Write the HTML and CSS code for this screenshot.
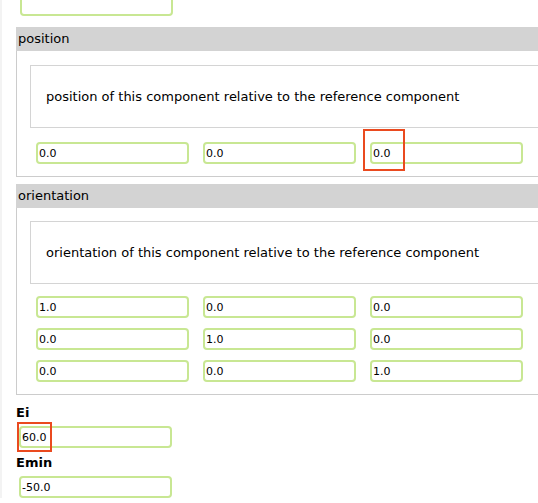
FILE: index.html
```html
<!DOCTYPE html>
<html>
<head>
<meta charset="utf-8">
<link rel="stylesheet" href="styles.css">
</head>
<body>
<div class="page">
  <div class="field field-top"><input class="inp" type="text" value=""></div>

  <div class="section">
    <div class="sec-head">position</div>
    <div class="sec-body">
      <div class="desc">position of this component relative to the reference component</div>
      <div class="grid">
        <div class="cell"><input class="inp" type="text" value="0.0"></div>
        <div class="cell"><input class="inp" type="text" value="0.0"></div>
        <div class="cell"><input class="inp" type="text" value="0.0"><span class="mark mark-pos"></span></div>
      </div>
    </div>
  </div>

  <div class="section section-orient">
    <div class="sec-head">orientation</div>
    <div class="sec-body">
      <div class="desc">orientation of this component relative to the reference component</div>
      <div class="grid">
        <div class="cell"><input class="inp" type="text" value="1.0"></div>
        <div class="cell"><input class="inp" type="text" value="0.0"></div>
        <div class="cell"><input class="inp" type="text" value="0.0"></div>
        <div class="cell"><input class="inp" type="text" value="0.0"></div>
        <div class="cell"><input class="inp" type="text" value="1.0"></div>
        <div class="cell"><input class="inp" type="text" value="0.0"></div>
        <div class="cell"><input class="inp" type="text" value="0.0"></div>
        <div class="cell"><input class="inp" type="text" value="0.0"></div>
        <div class="cell"><input class="inp" type="text" value="1.0"></div>
      </div>
    </div>
  </div>

  <div class="label">Ei</div>
  <div class="field field-ei"><input class="inp" type="text" value="60.0"><span class="mark mark-ei"></span></div>
  <div class="label label-emin">Emin</div>
  <div class="field field-ei"><input class="inp" type="text" value="-50.0"></div>
</div>
</body>
</html>
```

FILE: styles.css
```css
html, body {
  margin: 0;
  padding: 0;
  overflow: hidden;
  background: #ffffff;
}

body {
  font-family: "DejaVu Sans", Verdana, sans-serif;
  color: #000;
}

.page {
  border-left: 2px solid #f3f3f3;
  padding-left: 14px;
  min-height: 503px;
  box-sizing: border-box;
}

.inp {
  display: block;
  box-sizing: border-box;
  width: 153px;
  height: 22px;
  border: 2px solid #c8e793;
  border-radius: 4px;
  padding: 0 0 0 1px;
  margin: 0;
  font-family: "DejaVu Sans", Verdana, sans-serif;
  font-size: 11px;
  color: #000;
  background: #fff;
  outline: none;
}

.field {
  position: relative;
  width: 153px;
}

.field-top {
  margin-left: 4px;
  margin-top: -6px;
}

.section {
  width: 540px;
  margin-top: 11px;
}

.section + .section {
  margin-top: 7px;
}

.sec-head {
  background: #d3d3d3;
  height: 24px;
  line-height: 24px;
  padding-left: 2px;
  font-size: 13px;
}

.sec-body {
  border-left: 1px solid #cccccc;
  border-bottom: 1px solid #cccccc;
  padding: 14px 0 12px 13px;
}

.section-orient .sec-body {
  padding-top: 13px;
}

.desc {
  border: 1px solid #d4d4d4;
  height: 61px;
  display: flex;
  align-items: center;
  padding-left: 15px;
  font-size: 13px;
}

.grid {
  display: grid;
  grid-template-columns: 153px 153px 153px;
  column-gap: 14px;
  row-gap: 10px;
  margin-top: 14px;
  margin-left: 6px;
}

.section-orient .grid {
  margin-top: 12px;
}

.cell {
  position: relative;
}

.mark {
  position: absolute;
  border: 2px solid #ea4a1f;
  box-sizing: border-box;
  pointer-events: none;
}

.mark-pos {
  left: -7px;
  top: -13px;
  width: 42px;
  height: 42px;
}

.label {
  font-weight: bold;
  font-size: 13px;
  margin-top: 10px;
  line-height: 16px;
}

.label-emin {
  margin-top: 7px;
}

.field-ei {
  margin-left: 3px;
  margin-top: 5px;
}

.mark-ei {
  left: -2px;
  top: -4px;
  width: 35px;
  height: 30px;
}
```
